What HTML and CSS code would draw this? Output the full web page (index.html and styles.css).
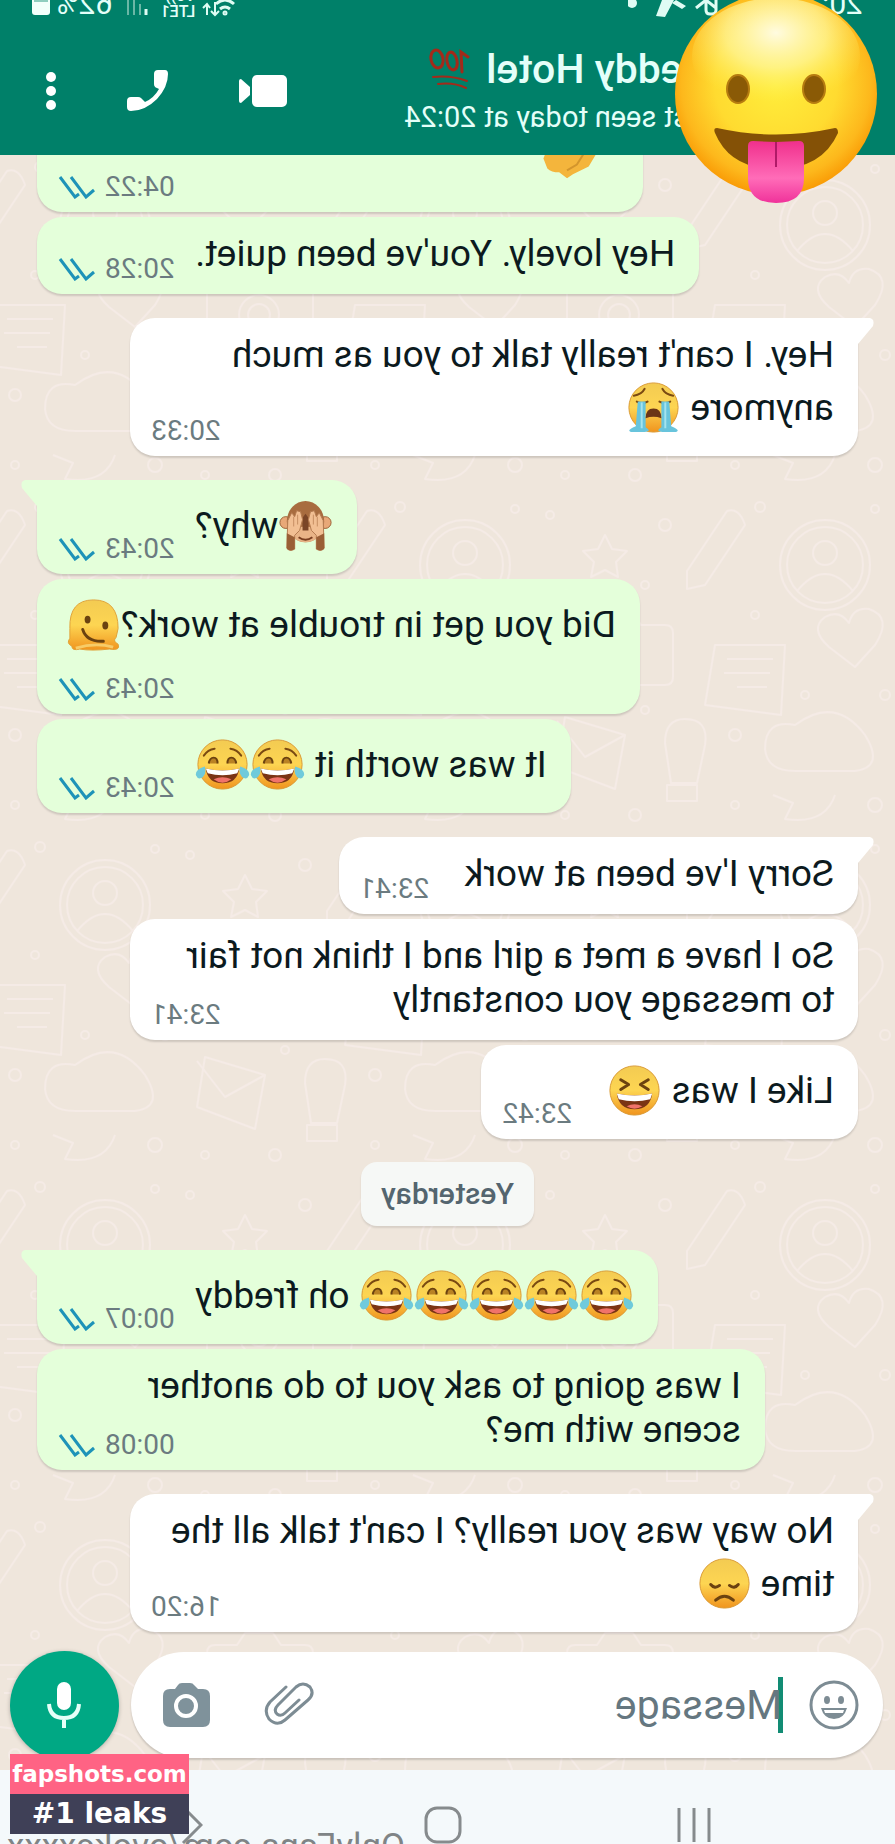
FILE: index.html
```html
<!DOCTYPE html>
<html lang="en">
<head>
  <meta charset="UTF-8">
  <meta name="viewport" content="width=device-width, initial-scale=1.0">
  <title>Chat</title>
  <link rel="stylesheet" href="styles.css">
</head>
<body>
  <!-- shared drawings -->
  <svg class="defs" aria-hidden="true">
    <defs>
      <linearGradient id="skin" x1="0" y1="0" x2="0" y2="1">
        <stop offset="0" stop-color="#f3cb52"/>
        <stop offset=".5" stop-color="#fdd552"/>
        <stop offset="1" stop-color="#f0941e"/>
      </linearGradient>
      <radialGradient id="ball" cx=".5" cy=".45" r=".55">
        <stop offset="0" stop-color="#ffee3c"/>
        <stop offset=".55" stop-color="#ffdb30"/>
        <stop offset=".85" stop-color="#fdb81c"/>
        <stop offset="1" stop-color="#f99a05"/>
      </radialGradient>
      <radialGradient id="shine" cx=".5" cy=".3" r=".6">
        <stop offset="0" stop-color="#fffbe0"/>
        <stop offset=".5" stop-color="#fff7a0" stop-opacity=".7"/>
        <stop offset="1" stop-color="#ffee50" stop-opacity="0"/>
      </radialGradient>
      <linearGradient id="tongue" x1="0" y1="0" x2="0" y2="1">
        <stop offset="0" stop-color="#f0308c"/>
        <stop offset=".6" stop-color="#ff6cb8"/>
        <stop offset="1" stop-color="#f0329a"/>
      </linearGradient>
    </defs>
    <symbol id="joy" viewBox="-27.5 -31 55 62">
      <circle r="25" fill="url(#skin)" stroke="#d99a35"/>
      <path d="M-19-9q4-6 11-7M19-9q-4-6-11-7" fill="none" stroke="#7a4a12" stroke-width="2" stroke-linecap="round"/>
      <path d="M-14-1q1-6 5-6t4 6M14-1q-1-6-5-6t-4 6" fill="#b98224" stroke="#6b4210" stroke-width="2"/>
      <path d="M-17 4q17 4 34 0q-2 15-17 15T-17 4z" fill="#7b3414"/>
      <path d="M-17 4q17 4 34 0l-2 5q-15 4-30 0z" fill="#fff"/>
      <path d="M-9 15q9-4 18 0q-9 7-18 0z" fill="#f0736a"/>
      <path d="M-18 2q-10 3-9 9q2 5 7 2q4-4 2-11zM18 2q10 3 9 9q-2 5-7 2q-4-4-2-11z" fill="#6fcadb"/>
    </symbol>
    <symbol id="sob" viewBox="-27.5 -31 55 62">
      <circle r="25" fill="url(#skin)" stroke="#d99a35"/>
      <path d="M-20-12q8-1 11-7M20-12q-8-1-11-7M-17-6q5 3 11 0M17-6q-5 3-11 0" fill="none" stroke="#7a4a12" stroke-width="2" stroke-linecap="round"/>
      <path d="M-16-6h8v26q8 5-4 5h-11q-5-2 5-6zM16-6h-8v26q-8 5 4 5h11q5-2-5-6z" fill="#68c4dc"/>
      <path d="M-12-5v26M12-5v26" stroke="#a5e3ee" stroke-width="2"/>
      <path d="M-8 11q0-10 8-10t8 10q-8-3-16 0z" fill="#6b3517"/>
    </symbol>
    <symbol id="monkey" viewBox="-27.5 -31 55 62">
      <circle cx="-20" cy="-3" r="6" fill="#e8a878" stroke="#9c6137"/>
      <circle cx="20" cy="-3" r="6" fill="#e8a878" stroke="#9c6137"/>
      <ellipse cy="-4" rx="19" ry="21" fill="#a86c3f"/>
      <ellipse cy="9" rx="13" ry="8" fill="#e9b487"/>
      <path d="M-7 12q7 5 14 0" fill="none" stroke="#7a3f20" stroke-width="2"/>
      <path d="M-3-8L0-12l3 4v13h-6z" fill="#7a4527"/>
      <path d="M-18-5l4-8 3 4 2-6 4 1 2 8-3 11-5 5v14q-5 3-8-1zM18-5l-4-8-3 4-2-6-4 1-2 8 3 11 5 5v14q5 3 8-1z" fill="#f2bf93" stroke="#b47a50"/>
      <path d="M-19 8l8 4v12q-4 3-8 0zM19 8l-8 4v12q4 3 8 0z" fill="#9a5f36"/>
      <path d="M-12-9v10M-8-11v10M12-9v10M8-11v10" stroke="#c68e62"/>
    </symbol>
    <symbol id="melt" viewBox="-27.5 -31 55 62">
      <path d="M-25 4q0-29 25-29T24 4v10q4 5-2 8q0 5-8 3q-12 2-30 0q-12 2-9-5q6-3 2-7z" fill="url(#skin)" stroke="#e0a238"/>
      <ellipse cx="6" cy="-5" rx="3" ry="4" fill="#6b4210"/>
      <ellipse cx="-12" cy="1" rx="3" ry="4" fill="#6b4210"/>
      <path d="M11 5q-4 13-21 12" fill="none" stroke="#6b4210" stroke-width="3" stroke-linecap="round"/>
      <path d="M-20 23q18-5 38 1" fill="none" stroke="#f7cc68" stroke-width="3"/>
    </symbol>
    <symbol id="squint" viewBox="-27.5 -31 55 62">
      <circle r="25" fill="url(#skin)" stroke="#d99a35"/>
      <path d="M-14-11l8 5-8 5M14-11l-8 5 8 5" fill="none" stroke="#6b4210" stroke-width="3" stroke-linecap="round" stroke-linejoin="round"/>
      <path d="M-18 3q18 4 36 0q-2 16-18 16T-18 3z" fill="#7b3414"/>
      <path d="M-18 3q18 4 36 0l-2 6q-16 4-32 0z" fill="#fff"/>
      <path d="M-8 16q8-4 16 0q-8 5-16 0z" fill="#f0736a"/>
    </symbol>
    <symbol id="sad" viewBox="-27.5 -31 55 62">
      <circle r="25" fill="url(#skin)" stroke="#d99a35"/>
      <path d="M-14 1q4 5 9 1M14 1q-4 5-9 1" fill="none" stroke="#6b4210" stroke-width="3" stroke-linecap="round"/>
      <path d="M-9 17q9-8 18 0" fill="none" stroke="#6b4210" stroke-width="3" stroke-linecap="round"/>
    </symbol>
    <symbol id="ticks" viewBox="0 0 38 24">
      <path d="M2 15l8 7L25 2M17 19l4 3L36 2" fill="none" stroke="#1e93b8" stroke-width="3"/>
    </symbol>
  </svg>

  <div class="phone">
    <header class="top">
      <div class="status">
        <span class="clock">20:24</span>
        <svg class="notes" viewBox="0 0 100 20" fill="#dffcf4">
          <path d="M12 0v10q0 4 4 4h2q4 0 4-4V0M22 0l10 8M12 8L22 0" fill="none" stroke="#dffcf4" stroke-width="3"/>
          <path d="M54 0h12l6 16-9 1zM52 0l-10 6 4 3 10-6z"/>
          <circle cx="96" cy="3" r="5"/>
        </svg>
        <svg class="wifi" viewBox="0 0 34 20" fill="none" stroke="#dffcf4" stroke-width="3">
          <path d="M2 4q9-8 18 0M6 9q5-4 10 0"/>
          <circle cx="11" cy="13" r="1"/>
          <path d="M21 2v13M17 11l4 4 4-4M29 15V5M26 8l3-4 4 4" stroke-width="2"/>
        </svg>
        <span class="lte">Vo))<br>LTE1</span>
        <svg class="bars" viewBox="0 0 22 20">
          <path d="M2 9v6" stroke="#dffcf4" stroke-width="3"/>
          <path d="M8 4v11M14 0v15M20 0v15" stroke="#6ab7a6" stroke-width="2"/>
        </svg>
        <span>62%</span>
        <svg class="battery" viewBox="0 0 18 20">
          <path d="M0 0h18v12q0 3-3 3H3q-3 0-3-3z" fill="#f2fffb"/>
          <path d="M2 0h14v2H2z" fill="#8fcdbf"/>
        </svg>
      </div>
      <div class="bar">
        <div class="who">
          <h1>Freddy Hotel
            <svg class="hundred" viewBox="0 0 42 42" fill="none" stroke="#a32a1a" stroke-width="3" stroke-linecap="round">
              <path d="M2 9l7-5-1 20"/>
              <ellipse cx="18" cy="13" rx="5" ry="9" transform="rotate(12 18 13)"/>
              <ellipse cx="33" cy="11" rx="6" ry="9" transform="rotate(12 33 11)"/>
              <path d="M3 33q16-6 34-4M4 40q12-6 28-4" stroke-width="2"/>
            </svg>
          </h1>
          <p>last seen today at 20:24</p>
        </div>
        <button class="icon" aria-label="Video call">
          <svg width="48" height="32" viewBox="0 0 48 32" fill="#fff">
            <rect width="35" height="32" rx="5"/>
            <path d="M37 12l9-8q2 0 2 2v20q0 2-2 2l-9-8z"/>
          </svg>
        </button>
        <button class="icon" aria-label="Call">
          <svg width="41" height="41" viewBox="0 0 41 41" fill="#fff">
            <path d="M3 0h7q4 0 4 4v10q0 3-3 4l-2 1q5 9 14 13l4-4q1-1 3-1h7q4 0 4 4v6q0 4-4 4Q23 41 11 29Q0 17 0 4q0-4 3-4z"/>
          </svg>
        </button>
        <button class="icon" aria-label="Menu">
          <svg width="10" height="40" viewBox="0 0 10 40" fill="#fff">
            <circle cx="5" cy="6" r="5"/><circle cx="5" cy="20" r="5"/><circle cx="5" cy="34" r="5"/>
          </svg>
        </button>
      </div>
      <!-- sticker over the avatar -->
      <svg class="sticker" viewBox="0 0 204 210">
        <circle cx="102" cy="100" r="101" fill="url(#ball)"/>
        <ellipse cx="102" cy="62" rx="84" ry="58" fill="url(#shine)"/>
        <ellipse cx="64" cy="95" rx="11" ry="14" fill="#8a5a06" stroke="#b67c10" stroke-width="2"/>
        <ellipse cx="140" cy="95" rx="11" ry="14" fill="#8a5a06" stroke="#b67c10" stroke-width="2"/>
        <path d="M43 134q59 13 118 0q4 0 2 5q-15 36-61 36T40 139q0-5 3-5z" fill="#845106"/>
        <path d="M74 152q0-5 5-5l23 1 23-1q5 0 5 5v32q0 25-28 25t-28-25z" fill="url(#tongue)"/>
        <path d="M102 148v25" stroke="#b01a68" stroke-width="2"/>
      </svg>
    </header>

    <main class="chat">
      <svg class="wall" aria-hidden="true">
        <defs>
          <pattern id="doodle" width="360" height="340" patternUnits="userSpaceOnUse">
            <g fill="none" stroke="#f5ebe6" stroke-width="2" stroke-linejoin="round">
              <circle cx="70" cy="70" r="45"/><circle cx="70" cy="70" r="38"/><circle cx="70" cy="58" r="12"/>
              <path d="M42 96q28-34 56 0"/>
              <path d="M150 30l40 60 18 4 0-18-40-60q-12-4-18 14z"/>
              <path d="M290 40l7 14 15 2-11 11 3 15-14-7-13 7 2-15-11-11 15-2z"/>
              <path d="M230 130h24l8-12h28l8 12h22q8 0 8 8v44q0 8-8 8h-90q-8 0-8-8v-44q0-8 8-8z"/>
              <circle cx="276" cy="160" r="20"/><circle cx="276" cy="160" r="11"/>
              <path d="M20 150q-18-28 6-36q16-2 20 14q10-14 24-6q16 12-4 30l-26 20z"/>
              <path d="M110 150h70l10 60-76 10z"/><path d="M122 164h46M125 178h46M128 192h30"/>
              <path d="M30 240q30-40 70-10q30-6 30 24q-2 22-30 22H40q-30-4-10-36z"/>
              <path d="M190 250q-4-26 20-26q20 0 20 24l-6 40h-26z"/><path d="M198 290h30v16h-30z"/>
              <path d="M270 240l60-18 8 50-58 22z"/><path d="M270 240l40 22 28-36"/>
              <path d="M60 300q10 30 50 24l-8-16 20-8"/>
              <circle cx="140" cy="120" r="4"/><circle cx="230" cy="30" r="6"/><circle cx="250" cy="90" r="4"/>
              <circle cx="340" cy="110" r="6"/><circle cx="10" cy="200" r="5"/><circle cx="90" cy="200" r="4"/>
              <circle cx="160" cy="240" r="6"/><circle cx="250" cy="215" r="4"/><circle cx="20" cy="310" r="7"/>
              <circle cx="160" cy="310" r="4"/><circle cx="260" cy="320" r="6"/><circle cx="330" cy="320" r="4"/>
              <circle cx="345" cy="20" r="4"/><circle cx="135" cy="12" r="5"/><circle cx="20" cy="14" r="4"/>
            </g>
          </pattern>
        </defs>
        <rect width="100%" height="100%" fill="url(#doodle)"/>
      </svg>

      <section class="messages">
        <article class="msg sent cut">
          <p><svg class="hand" viewBox="0 0 64 62">
            <path d="M8 0h40l10 26-4 10q-4 4-12 4l-8 6-6-4-16-8-12-20z" fill="#f4b53c"/>
            <path d="M10 10l14 22 10 6" fill="none" stroke="#d3952c" stroke-width="2"/>
          </svg></p>
          <span class="meta"><time>04:22</time><svg><use href="#ticks"/></svg></span>
        </article>
        <article class="msg sent">
          <p>Hey lovely. You've been quiet.</p>
          <span class="meta"><time>20:28</time><svg><use href="#ticks"/></svg></span>
        </article>

        <article class="msg got tail long">
          <p>Hey. I can't really talk to you as much anymore <svg class="emo"><use href="#sob"/></svg></p>
          <span class="meta"><time>20:33</time></span>
        </article>

        <article class="msg sent tail">
          <p><svg class="emo"><use href="#monkey"/></svg>why?</p>
          <span class="meta"><time>20:43</time><svg><use href="#ticks"/></svg></span>
        </article>
        <article class="msg sent below">
          <p>Did you get in trouble at work?<svg class="emo"><use href="#melt"/></svg></p>
          <span class="meta"><time>20:43</time><svg><use href="#ticks"/></svg></span>
        </article>
        <article class="msg sent">
          <p>It was worth it <svg class="emo"><use href="#joy"/></svg><svg class="emo"><use href="#joy"/></svg></p>
          <span class="meta"><time>20:43</time><svg><use href="#ticks"/></svg></span>
        </article>

        <article class="msg got tail">
          <p>Sorry I've been at work</p>
          <span class="meta"><time>23:41</time></span>
        </article>
        <article class="msg got long">
          <p>So I have a met a girl and I think not fair to message you constantly</p>
          <span class="meta"><time>23:41</time></span>
        </article>
        <article class="msg got">
          <p>Like I was <svg class="emo"><use href="#squint"/></svg></p>
          <span class="meta"><time>23:42</time></span>
        </article>

        <div class="day">Yesterday</div>

        <article class="msg sent tail">
          <p><svg class="emo"><use href="#joy"/></svg><svg class="emo"><use href="#joy"/></svg><svg class="emo"><use href="#joy"/></svg><svg class="emo"><use href="#joy"/></svg><svg class="emo"><use href="#joy"/></svg> oh freddy</p>
          <span class="meta"><time>00:07</time><svg><use href="#ticks"/></svg></span>
        </article>
        <article class="msg sent long">
          <p>I was going to ask you to do another scene with me?</p>
          <span class="meta"><time>00:08</time><svg><use href="#ticks"/></svg></span>
        </article>

        <article class="msg got tail long">
          <p>No way was you really? I can't talk all the time <svg class="emo"><use href="#sad"/></svg></p>
          <span class="meta"><time>16:20</time></span>
        </article>
      </section>

      <form class="composer">
        <div class="field">
          <button type="button" class="icon" aria-label="Emoji">
            <svg width="50" height="50" viewBox="0 0 50 50">
              <circle cx="25" cy="25" r="23" fill="none" stroke="#7d8c94" stroke-width="3"/>
              <ellipse cx="18" cy="20" rx="3" ry="4" fill="#7d8c94"/>
              <ellipse cx="32" cy="20" rx="3" ry="4" fill="#7d8c94"/>
              <path d="M12 28h26q-3 11-13 11T12 28z" fill="#7d8c94"/>
              <path d="M15 30h20l-1 3H16z" fill="#fff"/>
            </svg>
          </button>
          <span class="caret"></span>
          <input type="text" placeholder="Message" aria-label="Message">
          <button type="button" class="icon" aria-label="Attach">
            <svg width="50" height="46" viewBox="0 0 50 46" fill="none" stroke="#7d8c94" stroke-width="3" stroke-linecap="round">
              <path d="M28 5l16 15q7 8 1 17q-8 8-16 1L6 18Q-1 12 4 5q7-6 14 0l18 18q5 5 1 9q-4 3-8-1L15 18"/>
            </svg>
          </button>
          <button type="button" class="icon" aria-label="Camera">
            <svg width="47" height="44" viewBox="0 0 47 44">
              <path d="M16 2q1-2 4-2h8q3 0 4 2l3 4h5q7 0 7 7v24q0 7-7 7H7q-7 0-7-7V13q0-7 7-7h5z" fill="#7f929b"/>
              <circle cx="24" cy="23" r="10" fill="none" stroke="#fff" stroke-width="4"/>
            </svg>
          </button>
        </div>
        <button type="button" class="mic" aria-label="Voice message">
          <svg width="34" height="48" viewBox="0 0 34 48">
            <rect x="10" y="1" width="14" height="28" rx="7" fill="#fff"/>
            <path d="M2 23q1 14 15 14t15-14M17 37v10" fill="none" stroke="#e6fff8" stroke-width="4"/>
          </svg>
        </button>
      </form>
    </main>

    <nav class="keys">
      <button class="icon" aria-label="Recents">
        <svg width="36" height="38" viewBox="0 0 36 38"><path d="M3 2v34M18 2v34M33 2v34" stroke="#868b8d" stroke-width="3"/></svg>
      </button>
      <button class="icon" aria-label="Home">
        <svg width="38" height="38" viewBox="0 0 38 38"><rect x="2" y="2" width="34" height="34" rx="11" fill="none" stroke="#868b8d" stroke-width="3"/></svg>
      </button>
      <button class="icon" aria-label="Back">
        <svg width="22" height="38" viewBox="0 0 22 38"><path d="M20 1L2 19l18 18" fill="none" stroke="#868b8d" stroke-width="3"/></svg>
      </button>
      <span class="handle">OnlyFans.com/ovokexxxx</span>
    </nav>
  </div>

  <div class="stamp">
    <div>fapshots.com</div>
    <div>#1 leaks</div>
  </div>
</body>
</html>
```

FILE: styles.css
```css
*{
  box-sizing: border-box;
}
html,body{
  margin: 0;
  height: 100%;
}
body{
  position: relative;
  overflow: hidden;
  font-family: Roboto, "Liberation Sans", sans-serif;
}
h1,p{
  margin: 0;
}
button{
  flex: none;
  border: none;
  background: none;
  padding: 0;
}
svg{
  display: block;
}
.defs{
  position: absolute;
  width: 0;
  height: 0;
}
.phone{
  display: flex;
  flex-direction: column;
  height: 100%;
  transform: scaleX(-1);
}

/* header */
.top{
  position: relative;
  z-index: 2;
  height: 155px;
  background: #008069;
  color: #e4fff9;
}
.status{
  display: flex;
  align-items: flex-end;
  height: 20px;
  padding: 0 32px;
  overflow: hidden;
  font-size: 30px;
  line-height: 32px;
  gap: 7px;
}
.status svg{
  height: 20px;
}
.clock{
  width: 128px;
}
.notes{
  width: 100px;
  margin-right: auto;
}
.wifi{
  width: 34px;
}
.lte{
  font-size: 16px;
  font-weight: 500;
  line-height: 16px;
}
.bars{
  width: 22px;
  margin: 0 6px;
}
.battery{
  width: 18px;
}
.bar{
  display: flex;
  align-items: center;
  height: 135px;
  gap: 71px;
  padding: 6px 46px 0 176px;
}
.who{
  flex: 1;
  min-width: 0;
  white-space: nowrap;
}
.who h1{
  display: flex;
  align-items: center;
  gap: 16px;
  font-size: 41px;
  font-weight: 500;
  line-height: 52px;
}
.who p{
  padding-left: 8px;
  font-size: 29px;
  line-height: 44px;
}
.hundred{
  width: 42px;
  height: 42px;
}
.sticker{
  position: absolute;
  left: 17px;
  top: -6px;
  width: 204px;
}

/* chat */
.chat{
  position: relative;
  flex: 1;
  min-height: 0;
  display: flex;
  flex-direction: column;
  background: #efe6dc;
}
.wall{
  position: absolute;
  width: 100%;
  height: 100%;
}
.messages{
  position: relative;
  flex: 1;
  min-height: 0;
  overflow: hidden;
  display: flex;
  flex-direction: column;
  justify-content: flex-end;
  gap: 5px;
  padding: 0 37px 20px;
}
.msg{
  position: relative;
  display: grid;
  flex: none;
  max-width: calc(100% - 93px);
  border-radius: 25px;
  box-shadow: 0 2px 2px rgba(0,0,0,.14);
  font-size: 37px;
  line-height: 44px;
  color: #0c1a1e;
}
.msg p{
  grid-area: 1 / 1;
  padding: 15px 126px 18px 24px;
}
.sent{
  align-self: flex-end;
  background: #e4ffda;
}
.sent p{
  padding-right: 158px;
}
.got{
  align-self: flex-start;
  background: #fff;
}
.long p{
  padding-right: 24px;
}
.below p{
  padding: 15px 29px 59px 24px;
}
.cut{
  width: 606px;
}
.meta{
  grid-area: 1 / 1;
  align-self: end;
  justify-self: end;
  display: flex;
  align-items: center;
  gap: 9px;
  padding: 0 21px 8px;
  font-size: 28px;
  line-height: 34px;
  color: #6b7b80;
}
.meta svg{
  width: 38px;
  height: 24px;
}
.emo,.hand{
  display: inline-block;
  width: 55px;
  height: 61px;
  vertical-align: -18px;
}
.hand{
  width: 64px;
  margin-left: 18px;
}
/* first bubble of a group */
.tail{
  margin-top: 19px;
}
.tail::before{
  content: "";
  position: absolute;
  top: 0;
  width: 18px;
  height: 26px;
  background: inherit;
}
.got.tail{
  border-top-left-radius: 0;
}
.got.tail::before{
  left: -16px;
  clip-path: path("M4 0H18V26H16L1 8Q-1 1 4 0Z");
}
.sent.tail{
  border-top-right-radius: 0;
}
.sent.tail::before{
  right: -16px;
  clip-path: path("M14 0H0V26H2L17 8Q19 1 14 0Z");
}
.day{
  align-self: center;
  margin: 18px 0 0;
  padding: 10px 20px;
  border-radius: 16px;
  background: #f6f8f6;
  box-shadow: 0 2px 2px rgba(0,0,0,.1);
  font-size: 30px;
  font-weight: 500;
  line-height: 44px;
  color: #54656f;
}

/* message box */
.composer{
  position: relative;
  display: flex;
  align-items: center;
  gap: 12px;
  padding: 0 10px 12px 12px;
}
.field{
  flex: 1;
  min-width: 0;
  display: flex;
  align-items: center;
  height: 106px;
  padding: 0 32px 0 24px;
  border-radius: 53px;
  background: #fff;
  box-shadow: 0 2px 2px rgba(0,0,0,.16);
}
.caret{
  flex: none;
  width: 5px;
  height: 56px;
  margin: 0 -4px 0 26px;
  background: #128c74;
}
.field input{
  flex: 1;
  min-width: 0;
  border: none;
  outline: none;
  padding: 0;
  background: none;
  font-family: inherit;
  font-size: 41px;
  line-height: 50px;
  color: #0c1a1e;
}
.field input::placeholder{
  color: #657780;
  opacity: 1;
}
.field input ~ .icon + .icon{
  margin-left: 54px;
}
.mic{
  display: flex;
  align-items: center;
  justify-content: center;
  width: 109px;
  height: 109px;
  margin: -2px 0;
  border-radius: 50%;
  background: #00a884;
  box-shadow: 0 1px 4px rgba(0,0,0,.25);
}

/* system keys */
.keys{
  position: relative;
  display: flex;
  flex: none;
  height: 74px;
  padding: 36px 67px 0 76px;
  overflow: hidden;
  background: #f4f9fb;
}
.keys .icon{
  flex: 1;
  display: flex;
  justify-content: center;
}
.handle{
  position: absolute;
  left: 490px;
  top: 57px;
  font-size: 35px;
  line-height: 40px;
  color: #7f8486;
}

.stamp{
  position: absolute;
  left: 10px;
  bottom: 10px;
  width: 179px;
  font-family: "DejaVu Sans", sans-serif;
  font-weight: bold;
  font-size: 23px;
  line-height: 40px;
  text-align: center;
  color: #fff;
  background: #ff6384;
}
.stamp div + div{
  font-size: 28px;
  background: #3f4057;
}
```
